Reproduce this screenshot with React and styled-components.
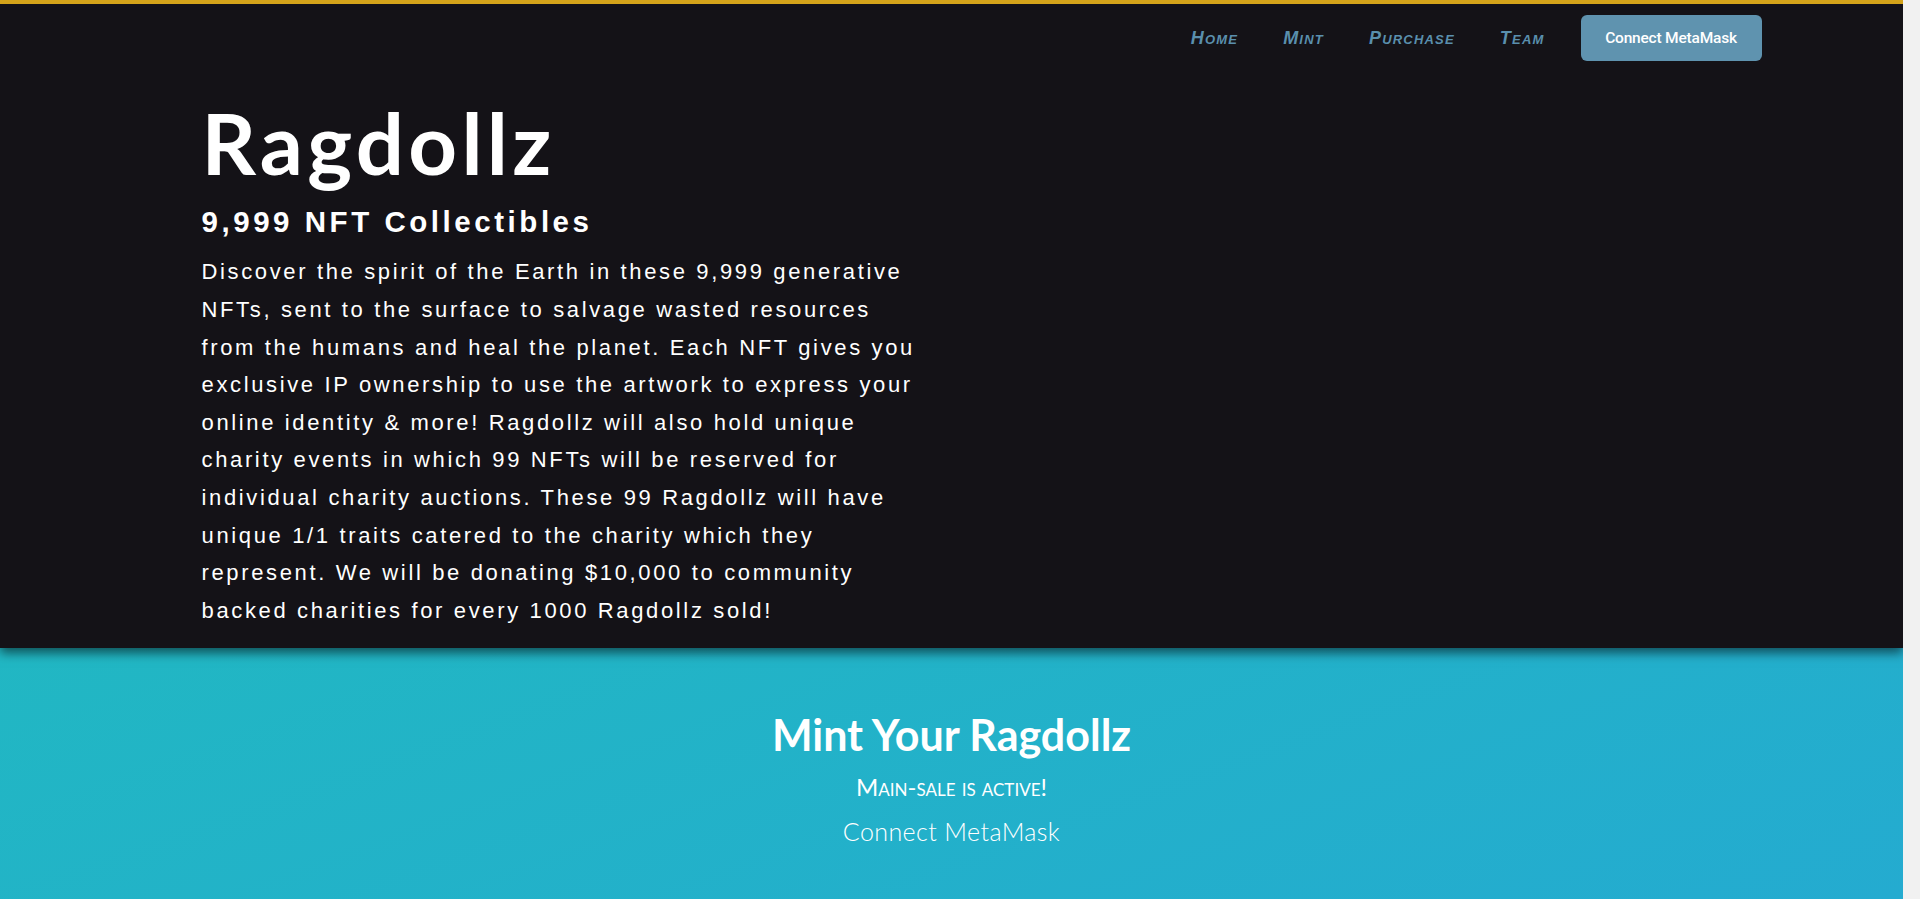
import React from "react";
import styled, { createGlobalStyle } from "styled-components";

const GlobalStyle = createGlobalStyle`
  html, body { margin: 0; padding: 0; }
  body {
    background: #f1f1f1;
    padding-right: 17px;
    font-family: "Liberation Sans", Arial, sans-serif;
    -webkit-font-smoothing: antialiased;
  }
  * { box-sizing: border-box; }
`;

const Page = styled.div`
  display: flex;
  flex-direction: column;
  min-height: 100vh;
  background: #141217;
  overflow: hidden;
`;

const Hero = styled.header`
  position: relative;
  z-index: 2;
  background: #141217;
  border-top: 4px solid #d4a31a;
  box-shadow: 0 5px 10px rgba(0, 0, 0, 0.55);
  padding-bottom: 19px;
`;

const NavBar = styled.nav`
  width: 1620px;
  max-width: 100%;
  margin: 0 auto;
  padding-top: 11px;
  display: flex;
  justify-content: flex-end;
  align-items: center;
`;

const NavLinks = styled.ul`
  list-style: none;
  margin: 0 36px 0 0;
  padding: 0;
  display: flex;
  gap: 45px;
`;

const NavLink = styled.a`
  font-family: "Liberation Sans", Arial, sans-serif;
  font-style: italic;
  font-weight: 700;
  font-variant: small-caps;
  font-size: 18px;
  letter-spacing: 1.2px;
  color: #5a8fad;
  text-decoration: none;
  cursor: pointer;
`;

const ConnectButton = styled.button`
  width: 181px;
  height: 46px;
  border: none;
  border-radius: 6px;
  background: #5f93af;
  color: #ffffff;
  font-family: Roboto, "Liberation Sans", sans-serif;
  font-weight: 500;
  font-size: 15.5px;
  letter-spacing: -0.2px;
  cursor: pointer;
`;

const HeroContent = styled.div`
  width: 1500px;
  max-width: 100%;
  margin: 0 auto;
  color: #ffffff;
`;

const Title = styled.h1`
  margin: 39px 0 0;
  font-family: Lato, "Noto Sans", sans-serif;
  font-weight: 700;
  font-size: 85px;
  line-height: 1;
  letter-spacing: 4.3px;
`;

const Subtitle = styled.h2`
  margin: 19px 0 0;
  font-family: "Liberation Sans", Arial, sans-serif;
  font-weight: 700;
  font-size: 29.5px;
  letter-spacing: 0.12em;
  line-height: 1.2;
`;

const Description = styled.p`
  margin: 14px 0 0;
  max-width: 730px;
  font-family: "Liberation Sans", Arial, sans-serif;
  font-size: 22px;
  line-height: 37.6px;
  letter-spacing: 0.12em;
`;

const MintSection = styled.section`
  flex: 1;
  min-height: 1400px;
  background: linear-gradient(160deg, #21b7c3 0%, #24abd0 45%, #2d9dd0 100%);
  display: flex;
  flex-direction: column;
  align-items: center;
  padding-top: 61px;
  color: #ffffff;
`;

const MintTitle = styled.h2`
  margin: 0;
  font-family: Lato, "Noto Sans", sans-serif;
  font-weight: 700;
  font-size: 43px;
  line-height: 1.2;
`;

const SaleStatus = styled.p`
  margin: 12px 0 0;
  font-family: Lato, "Noto Sans", sans-serif;
  font-variant: small-caps;
  font-size: 24px;
  line-height: 1.2;
`;

const MintConnect = styled.button`
  margin-top: 14px;
  background: transparent;
  border: none;
  color: #ffffff;
  font-family: Lato, "Noto Sans", sans-serif;
  font-weight: 300;
  font-size: 25px;
  letter-spacing: 0.4px;
  cursor: pointer;
  padding: 0;
`;

const links = ["Home", "Mint", "Purchase", "Team"];

export default function App() {
  return (
    <>
      <GlobalStyle />
      <Page>
        <Hero>
          <NavBar>
            <NavLinks>
              {links.map((l) => (
                <li key={l}>
                  <NavLink>{l}</NavLink>
                </li>
              ))}
            </NavLinks>
            <ConnectButton>Connect MetaMask</ConnectButton>
          </NavBar>
          <HeroContent>
            <Title>Ragdollz</Title>
            <Subtitle>9,999 NFT Collectibles</Subtitle>
            <Description>
              Discover the spirit of the Earth in these 9,999 generative NFTs,
              sent to the surface to salvage wasted resources from the humans
              and heal the planet. Each NFT gives you exclusive IP ownership to
              use the artwork to express your online identity &amp; more!
              Ragdollz will also hold unique charity events in which 99 NFTs
              will be reserved for individual charity auctions. These 99
              Ragdollz will have unique 1/1 traits catered to the charity which
              they represent. We will be donating $10,000 to community backed
              charities for every 1000 Ragdollz sold!
            </Description>
          </HeroContent>
        </Hero>
        <MintSection>
          <MintTitle>Mint Your Ragdollz</MintTitle>
          <SaleStatus>Main-sale is active!</SaleStatus>
          <MintConnect>Connect MetaMask</MintConnect>
        </MintSection>
      </Page>
    </>
  );
}
